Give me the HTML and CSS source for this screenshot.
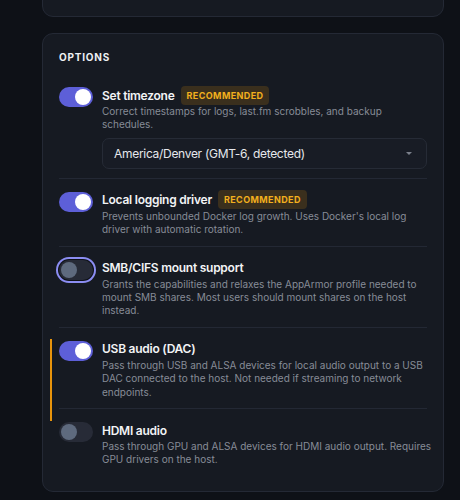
FILE: index.html
```html
<!DOCTYPE html>
<html lang="en">
<head>
    <meta charset="UTF-8">
    <meta name="viewport" content="width=device-width, initial-scale=1.0">
    <title>Container Options</title>
    <link rel="stylesheet" href="styles.css">
</head>
<body>
    <div class="page">
        <div class="card card-prev"></div>

        <div class="card options">
            <h3 class="options-title">Options</h3>

            <div class="option">
                <span class="toggle on"><span class="knob"></span></span>
                <div class="option-body">
                    <div class="option-head">
                        <span class="option-name">Set timezone</span>
                        <span class="badge">Recommended</span>
                    </div>
                    <p class="option-desc">Correct timestamps for logs, last.fm scrobbles, and backup<br>schedules.</p>
                    <div class="select">
                        <span>America/Denver (GMT-6, detected)</span>
                        <span class="caret"></span>
                    </div>
                </div>
            </div>

            <div class="option">
                <span class="toggle on"><span class="knob"></span></span>
                <div class="option-body">
                    <div class="option-head">
                        <span class="option-name">Local logging driver</span>
                        <span class="badge">Recommended</span>
                    </div>
                    <p class="option-desc">Prevents unbounded Docker log growth. Uses Docker's local log<br>driver with automatic rotation.</p>
                </div>
            </div>

            <div class="option">
                <span class="toggle focused"><span class="knob"></span></span>
                <div class="option-body">
                    <div class="option-head">
                        <span class="option-name">SMB/CIFS mount support</span>
                    </div>
                    <p class="option-desc">Grants the capabilities and relaxes the AppArmor profile needed to<br>mount SMB shares. Most users should mount shares on the host<br>instead.</p>
                </div>
            </div>

            <div class="option changed">
                <span class="toggle on"><span class="knob"></span></span>
                <div class="option-body">
                    <div class="option-head">
                        <span class="option-name">USB audio (DAC)</span>
                    </div>
                    <p class="option-desc">Pass through USB and ALSA devices for local audio output to a USB<br>DAC connected to the host. Not needed if streaming to network<br>endpoints.</p>
                </div>
            </div>

            <div class="option">
                <span class="toggle"><span class="knob"></span></span>
                <div class="option-body">
                    <div class="option-head">
                        <span class="option-name">HDMI audio</span>
                    </div>
                    <p class="option-desc">Pass through GPU and ALSA devices for HDMI audio output. Requires<br>GPU drivers on the host.</p>
                </div>
            </div>
        </div>
    </div>
</body>
</html>
```

FILE: styles.css
```css
body {
    margin: 0;
    background: #0e1117;
    font-family: Inter, "Noto Sans", sans-serif;
    color: #e6e8ec;
}

.page {
    padding: 0 16px 0 42px;
}

.card {
    background: #161a22;
    border: 1px solid #242935;
    border-radius: 11px;
    box-sizing: border-box;
}

.card-prev {
    height: 40px;
    margin-top: -23px;
    border-top-left-radius: 0;
    border-top-right-radius: 0;
}

.options {
    margin-top: 16px;
    padding: 16px 16px 15px;
}

.options-title {
    margin: 0 0 10px;
    font-size: 10px;
    line-height: 14px;
    font-weight: 700;
    letter-spacing: 0.8px;
    text-transform: uppercase;
    color: #eef0f3;
}

.option {
    position: relative;
    display: flex;
    gap: 9px;
    padding: 11px 0 9px;
    border-bottom: 1px solid #232834;
}

.option:last-child {
    border-bottom: none;
}

/* edited-but-unsaved marker */
.option.changed::before {
    content: "";
    position: absolute;
    left: -9px;
    top: 11px;
    bottom: -13px;
    width: 2px;
    background: #e8940c;
}

.toggle {
    position: relative;
    flex-shrink: 0;
    width: 34px;
    height: 20px;
    margin-top: 2px;
    border-radius: 10px;
    background: #272b37;
    box-sizing: border-box;
}

.toggle.on {
    background: #5d5fd8;
}

.toggle.focused {
    box-shadow: 0 0 0 1px #0e1117, 0 0 0 3px #8b8df2;
}

.knob {
    position: absolute;
    top: 2px;
    left: 2px;
    width: 16px;
    height: 16px;
    border-radius: 50%;
    background: #5e6a7e;
}

.toggle.on .knob {
    left: 16px;
    background: #fff;
}

.option-body {
    flex: 1;
    min-width: 0;
}

.option-head {
    display: flex;
    align-items: center;
    gap: 6px;
    height: 20px;
}

.option-name {
    font-size: 12px;
    font-weight: 600;
    letter-spacing: -0.25px;
    color: #f2f3f5;
}

.badge {
    padding: 3px 6px;
    border-radius: 4px;
    background: #3a2f1d;
    color: #f2b01e;
    font-size: 9px;
    font-weight: 700;
    letter-spacing: 0.4px;
    line-height: 13px;
    text-transform: uppercase;
}

.option-desc {
    margin: 0;
    font-size: 10px;
    line-height: 13.4px;
    white-space: nowrap;
    color: #878c97;
}

.select {
    display: flex;
    align-items: center;
    justify-content: space-between;
    height: 31px;
    margin: 6px 0 0;
    padding: 0 14px 0 11px;
    border: 1px solid #262b36;
    border-radius: 7px;
    background: #181c25;
    box-sizing: border-box;
    font-size: 12px;
    letter-spacing: -0.3px;
    color: #e6e8ec;
}

.caret {
    width: 0;
    height: 0;
    border-left: 3px solid transparent;
    border-right: 3px solid transparent;
    border-top: 3px solid #7b808b;
}
```
